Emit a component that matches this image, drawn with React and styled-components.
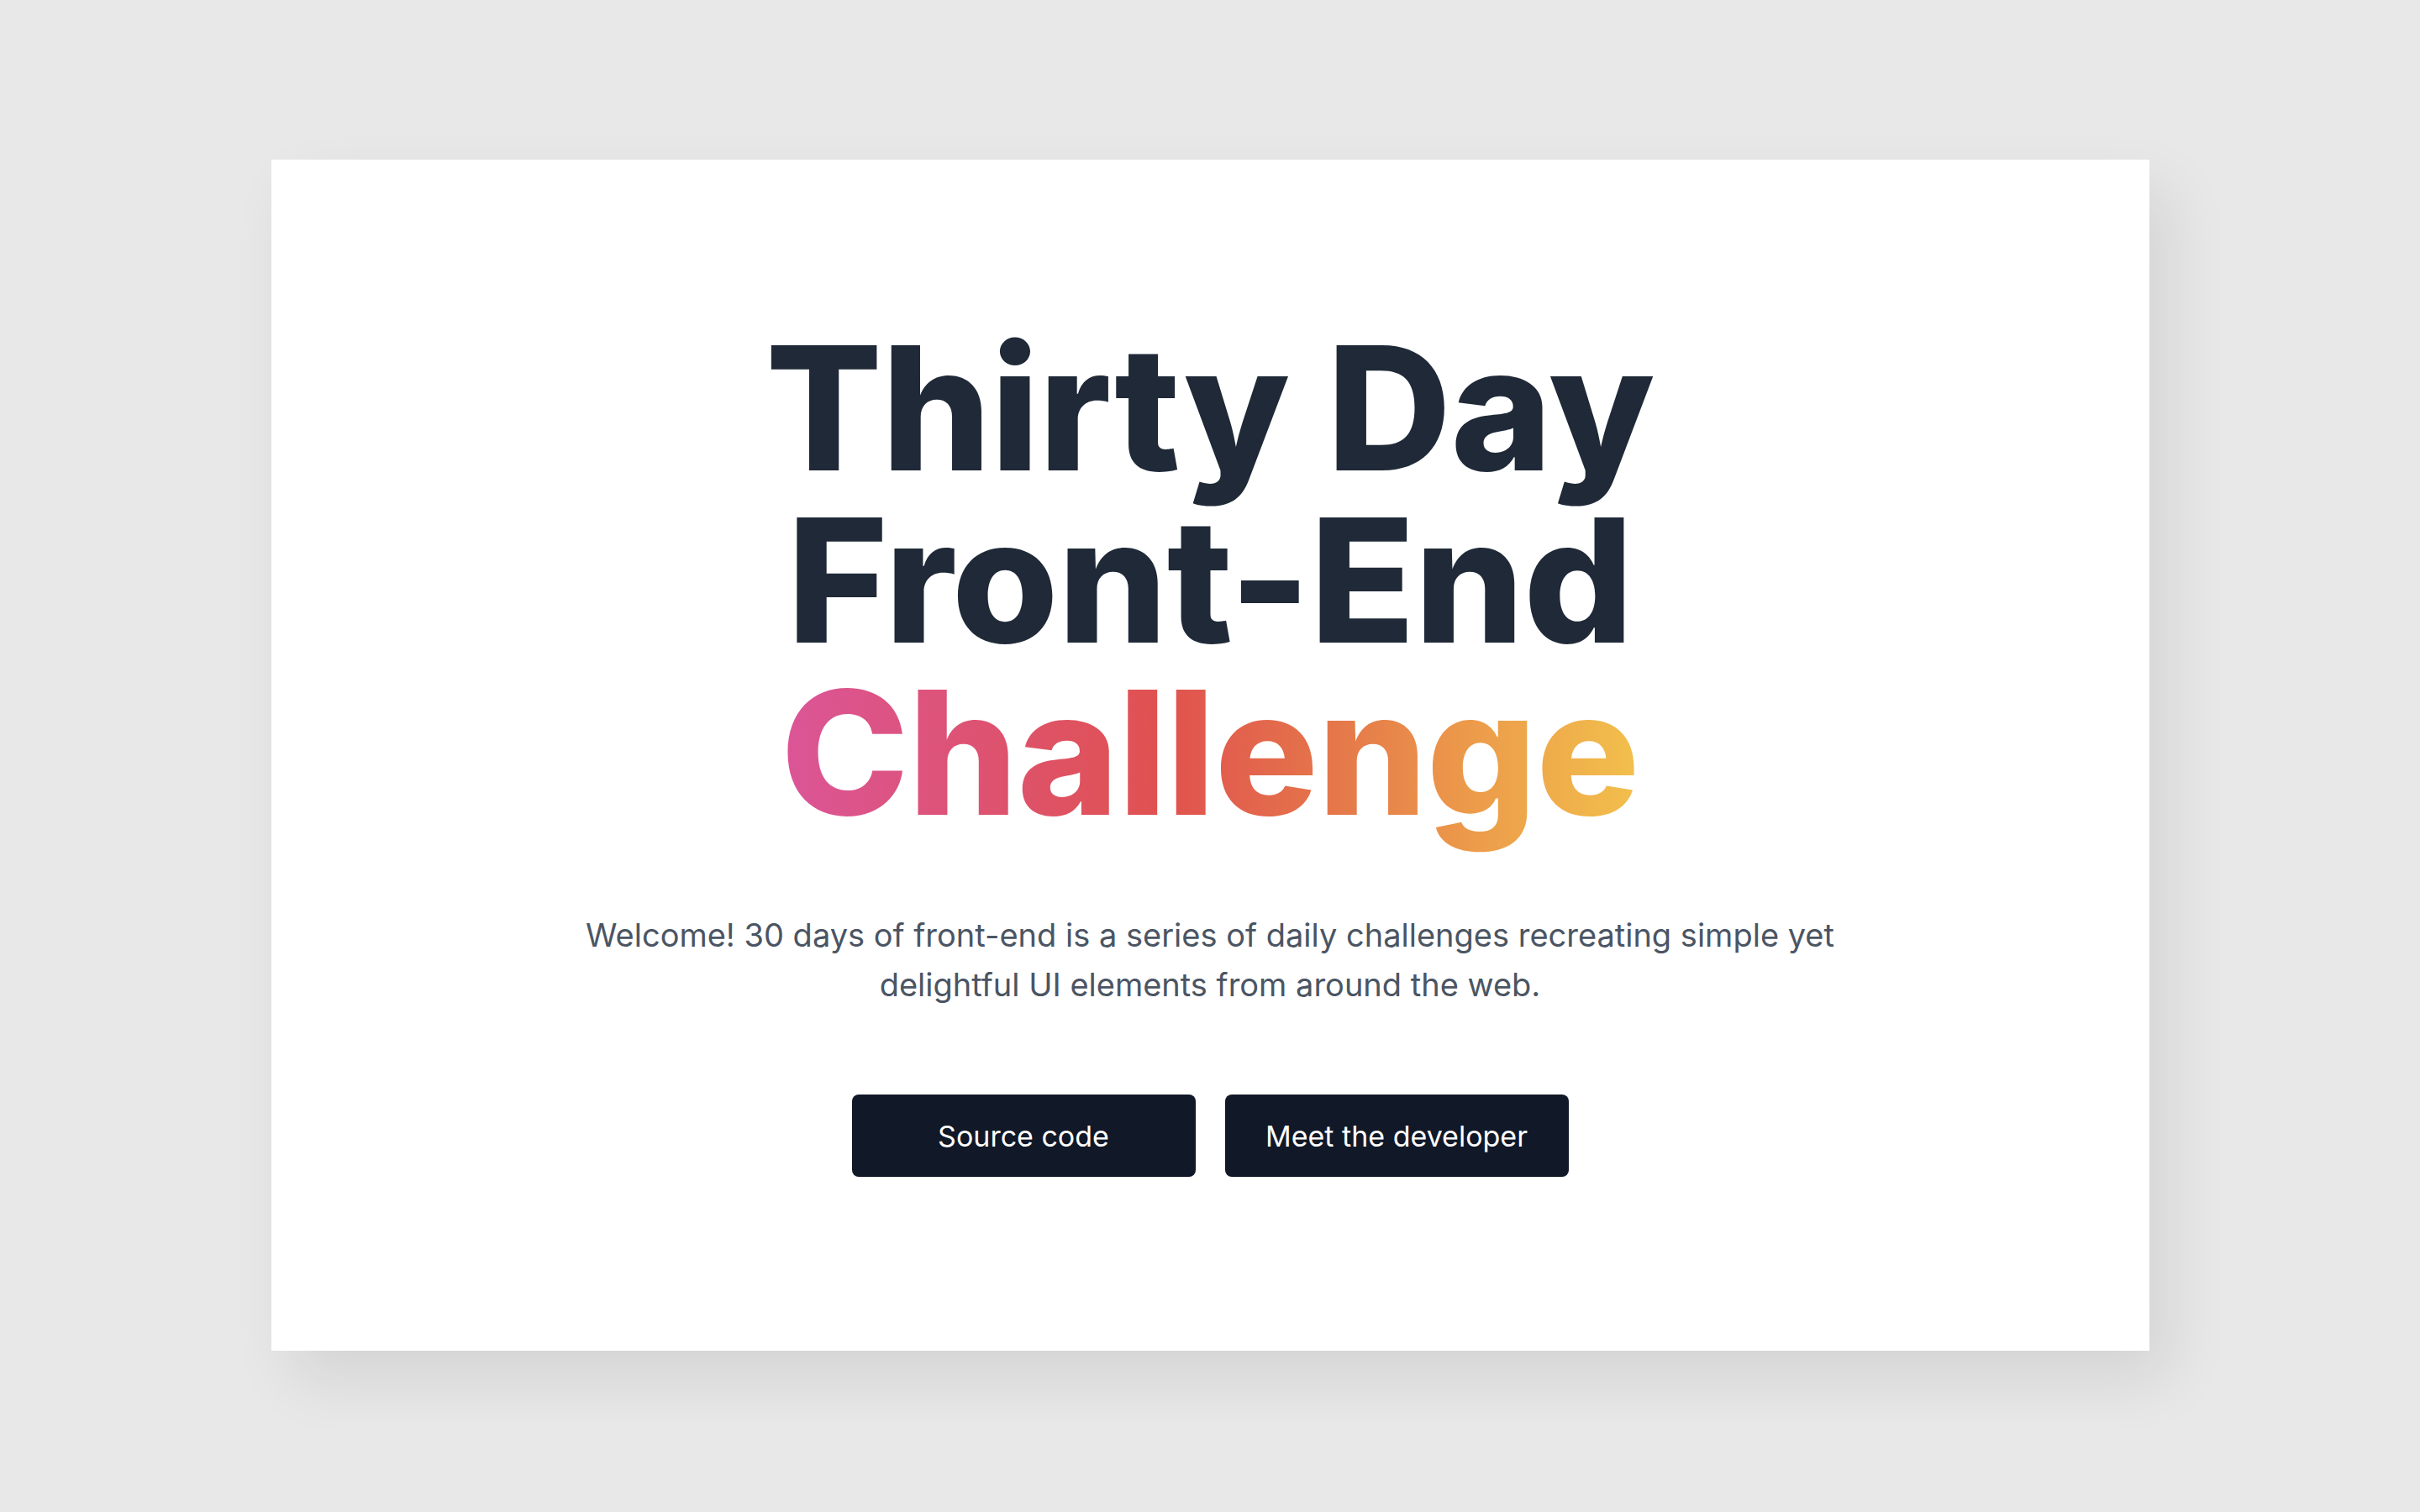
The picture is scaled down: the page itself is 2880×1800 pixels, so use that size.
import React from "react";
import styled, { createGlobalStyle } from "styled-components";

const GlobalStyle = createGlobalStyle`
  html, body {
    margin: 0;
    padding: 0;
    background: #e8e8e8;
    font-family: Inter, "Noto Sans", sans-serif;
  }
  * {
    box-sizing: border-box;
  }
`;

const Page = styled.main`
  min-height: 1800px;
  padding-top: 190px;
  display: flex;
  justify-content: center;
  align-items: flex-start;
`;

const Card = styled.section`
  width: 2235px;
  background: #ffffff;
  box-shadow: 24px 34px 70px rgba(0, 0, 0, 0.09);
  padding: 193px 0 207px;
  display: flex;
  flex-direction: column;
  align-items: center;
  text-align: center;
`;

const Heading = styled.h1`
  margin: 0;
  font-size: 205px;
  line-height: 205px;
  font-weight: 800;
  color: #1f2937;
  letter-spacing: -0.6px;
`;

const Line = styled.span`
  display: block;
`;

// extra bottom padding keeps the "g" descender inside the clipped background
const Gradient = styled.span`
  display: inline-block;
  padding-bottom: 40px;
  margin-bottom: -40px;
  background: linear-gradient(
    to right,
    #db5598 0%,
    #de5266 30%,
    #e0524f 45%,
    #e5784a 65%,
    #ec9a4a 80%,
    #f2c04c 100%
  );
  -webkit-background-clip: text;
  background-clip: text;
  color: transparent;
`;

const Intro = styled.p`
  margin: 86px 0 0;
  max-width: 1580px;
  font-size: 38px;
  line-height: 59px;
  color: #4b5563;
`;

const Actions = styled.div`
  margin-top: 101px;
  display: flex;
  gap: 35px;
`;

const Button = styled.a`
  width: 409px;
  height: 98px;
  display: flex;
  align-items: center;
  justify-content: center;
  background: #111827;
  color: #ffffff;
  border-radius: 8px;
  font-size: 34px;
  font-weight: 400;
  text-decoration: none;
  cursor: pointer;
`;

const App = () => {
  return (
    <>
      <GlobalStyle />
      <Page>
        <Card>
          <Heading>
            <Line>Thirty Day</Line>
            <Line>Front-End</Line>
            <Line>
              <Gradient>Challenge</Gradient>
            </Line>
          </Heading>
          <Intro>
            Welcome! 30 days of front-end is a series of daily challenges
            recreating simple yet delightful UI elements from around the web.
          </Intro>
          <Actions>
            <Button href="#">Source code</Button>
            <Button href="#">Meet the developer</Button>
          </Actions>
        </Card>
      </Page>
    </>
  );
};

export default App;
